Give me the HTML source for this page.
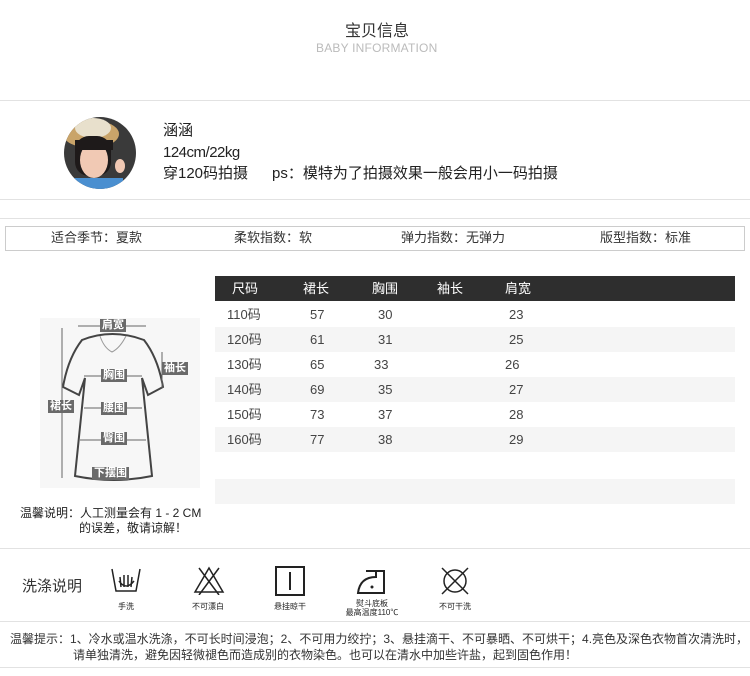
<!DOCTYPE html>
<html><head><meta charset="utf-8"><style>
*{margin:0;padding:0;box-sizing:border-box}
body{width:750px;height:676px;background:#fff;position:relative;overflow:hidden;font-family:"Liberation Sans","Noto Sans CJK SC",sans-serif;color:#333;line-height:1.2}
.a{position:absolute;white-space:nowrap}
.hl{position:absolute;left:0;width:750px;height:1px;background:#e2e2e2}
.row{position:absolute;left:215px;width:520px;height:25px;font-size:13px;color:#444}
.row span{position:absolute;top:5px;line-height:15px}
.g{background:#f5f5f5}
.lab{position:absolute;background:#6a6a6a;color:#fff;font-size:11px;font-weight:bold;padding:0 2px;line-height:13px}
.ic{position:absolute;top:565px}
.cap{position:absolute;font-size:8px;color:#222;text-align:center;width:80px;line-height:9px}
</style></head><body>
<div class="a" style="left:345px;top:22px;font-size:16px;line-height:20px;color:#333">宝贝信息</div>
<div class="a" style="left:316px;top:42px;font-size:12px;line-height:13px;color:#bbb;letter-spacing:0.2px">BABY INFORMATION</div>
<div class="hl" style="top:100px"></div>
<svg class="a" style="left:63px;top:116px" width="74" height="74"><defs><clipPath id="c"><circle cx="37" cy="37" r="36"/></clipPath></defs><g clip-path="url(#c)"><rect width="74" height="74" fill="#3a3a3a"/><ellipse cx="28" cy="18" rx="28" ry="14" fill="#c9a46a"/><ellipse cx="30" cy="12" rx="18" ry="10" fill="#e8e0cc"/><rect x="12" y="20" width="36" height="40" rx="14" fill="#1e1a1a"/><ellipse cx="31" cy="44" rx="14" ry="18" fill="#f1c9b4"/><rect x="12" y="24" width="38" height="10" fill="#1e1a1a"/><rect x="10" y="62" width="50" height="14" fill="#4a8fd0"/><ellipse cx="57" cy="50" rx="5" ry="7" fill="#f1c9b4"/></g></svg>
<div class="a" style="left:163px;top:122px;font-size:15px;line-height:18px;color:#222">涵涵</div>
<div class="a" style="left:163px;top:144px;font-size:15px;line-height:18px;color:#222;letter-spacing:-0.5px">124cm/22kg</div>
<div class="a" style="left:163px;top:165px;font-size:15px;line-height:18px;color:#222">穿120码拍摄<span style="display:inline-block;width:24px"></span>ps：模特为了拍摄效果一般会用小一码拍摄</div>
<div class="hl" style="top:199px"></div>
<div class="hl" style="top:218px"></div>
<div class="a" style="left:5px;top:226px;width:740px;height:25px;border:1px solid #ccc"></div>
<div class="a" style="left:51px;top:230px;font-size:13px;line-height:16px">适合季节：夏款</div>
<div class="a" style="left:234px;top:230px;font-size:13px;line-height:16px">柔软指数：软</div>
<div class="a" style="left:401px;top:230px;font-size:13px;line-height:16px">弹力指数：无弹力</div>
<div class="a" style="left:600px;top:230px;font-size:13px;line-height:16px">版型指数：标准</div>

<div class="a" style="left:215px;top:276px;width:520px;height:25px;background:#2e2e2e;color:#fff;font-size:13px;line-height:15px">
<span class="a" style="left:17px;top:5px">尺码</span><span class="a" style="left:88px;top:5px">裙长</span><span class="a" style="left:157px;top:5px">胸围</span><span class="a" style="left:222px;top:5px">袖长</span><span class="a" style="left:290px;top:5px">肩宽</span></div>
<div class="row" style="top:302px"><span style="left:12px">110码</span><span style="left:95px">57</span><span style="left:163px">30</span><span style="left:294px">23</span></div>
<div class="row g" style="top:327px"><span style="left:12px">120码</span><span style="left:95px">61</span><span style="left:163px">31</span><span style="left:294px">25</span></div>
<div class="row" style="top:352px"><span style="left:12px">130码</span><span style="left:95px">65</span><span style="left:159px">33</span><span style="left:290px">26</span></div>
<div class="row g" style="top:377px"><span style="left:12px">140码</span><span style="left:95px">69</span><span style="left:163px">35</span><span style="left:294px">27</span></div>
<div class="row" style="top:402px"><span style="left:12px">150码</span><span style="left:95px">73</span><span style="left:163px">37</span><span style="left:294px">28</span></div>
<div class="row g" style="top:427px"><span style="left:12px">160码</span><span style="left:95px">77</span><span style="left:163px">38</span><span style="left:294px">29</span></div>
<div class="row g" style="top:479px"></div>

<svg class="a" style="left:40px;top:318px" width="160" height="170"><rect width="160" height="170" fill="#f7f7f7"/>
<g fill="none" stroke="#444" stroke-width="2"><path d="M42 22 Q72 10 104 22 Q118 40 123 69 L108 77 L102 60 L112 158 Q74 166 35 158 L45 60 L39 77 L23 69 Q28 40 42 22 Z"/></g>
<path d="M60 18 Q64 30 72 34 Q80 30 86 18" fill="none" stroke="#999" stroke-width="1"/>
<g stroke="#666" stroke-width="1"><line x1="38" y1="8" x2="106" y2="8"/><line x1="22" y1="10" x2="22" y2="160"/><line x1="122" y1="34" x2="122" y2="70"/><line x1="44" y1="58" x2="102" y2="58"/><line x1="44" y1="90" x2="102" y2="90"/><line x1="40" y1="122" x2="106" y2="122"/></g></svg>
<div class="lab" style="left:100px;top:319px">肩宽</div>
<div class="lab" style="left:101px;top:369px">胸围</div>
<div class="lab" style="left:162px;top:362px">袖长</div>
<div class="lab" style="left:48px;top:400px">裙长</div>
<div class="lab" style="left:101px;top:402px">腰围</div>
<div class="lab" style="left:101px;top:432px">臀围</div>
<div class="lab" style="left:92px;top:467px">下摆围</div>
<div class="a" style="left:20px;top:506px;font-size:12px;line-height:14px;color:#222">温馨说明：人工测量会有 1 - 2 CM</div>
<div class="a" style="left:79px;top:521px;font-size:12px;line-height:14px;color:#222">的误差，敬请谅解！</div>

<div class="hl" style="top:548px"></div>
<div class="a" style="left:22px;top:578px;font-size:15px;line-height:18px;color:#333">洗涤说明</div>
<svg class="ic" style="left:110px" width="32" height="30"><g fill="none" stroke="#222" stroke-width="1.5"><path d="M2 4 L6 26 H26 L30 4"/><path d="M10 12 L11 22 M14 10 L14 22 M18 10 L18 22 M22 12 L21 22 M9 16 Q16 26 24 16"/></g></svg>
<div class="cap" style="left:86px;top:602px">手洗</div>
<svg class="ic" style="left:193px" width="32" height="30"><g fill="none" stroke="#222" stroke-width="1.5"><path d="M16 3 L30 27 H2 Z"/><path d="M6 3 L26 30 M26 3 L6 30"/></g></svg>
<div class="cap" style="left:168px;top:602px">不可漂白</div>
<svg class="ic" style="left:274px" width="32" height="32"><g fill="none" stroke="#222" stroke-width="2"><rect x="2" y="2" width="28" height="28"/><line x1="16" y1="7" x2="16" y2="25"/></g></svg>
<div class="cap" style="left:250px;top:602px">悬挂晾干</div>
<svg class="ic" style="left:356px" width="32" height="30"><g fill="none" stroke="#222" stroke-width="2"><path d="M10 6 H28 V28 H2 Q4 12 20 12 V6"/></g><circle cx="16" cy="22" r="1.5" fill="#222"/></svg>
<div class="cap" style="left:332px;top:599px">熨斗底板<br>最高温度110℃</div>
<svg class="ic" style="left:439px" width="32" height="32"><g fill="none" stroke="#222" stroke-width="1.5"><circle cx="16" cy="16" r="11"/><path d="M3 3 L29 29 M29 3 L3 29"/></g></svg>
<div class="cap" style="left:415px;top:602px">不可干洗</div>
<div class="hl" style="top:621px"></div>
<div class="a" style="left:10px;top:632px;font-size:12px;line-height:14px;color:#333">温馨提示：1、冷水或温水洗涤，不可长时间浸泡；2、不可用力绞拧；3、悬挂滴干、不可暴晒、不可烘干；4.亮色及深色衣物首次清洗时，</div>
<div class="a" style="left:73px;top:648px;font-size:12px;line-height:14px;color:#333">请单独清洗，避免因轻微褪色而造成别的衣物染色。也可以在清水中加些许盐，起到固色作用！</div>
<div class="hl" style="top:667px"></div>
</body></html>
